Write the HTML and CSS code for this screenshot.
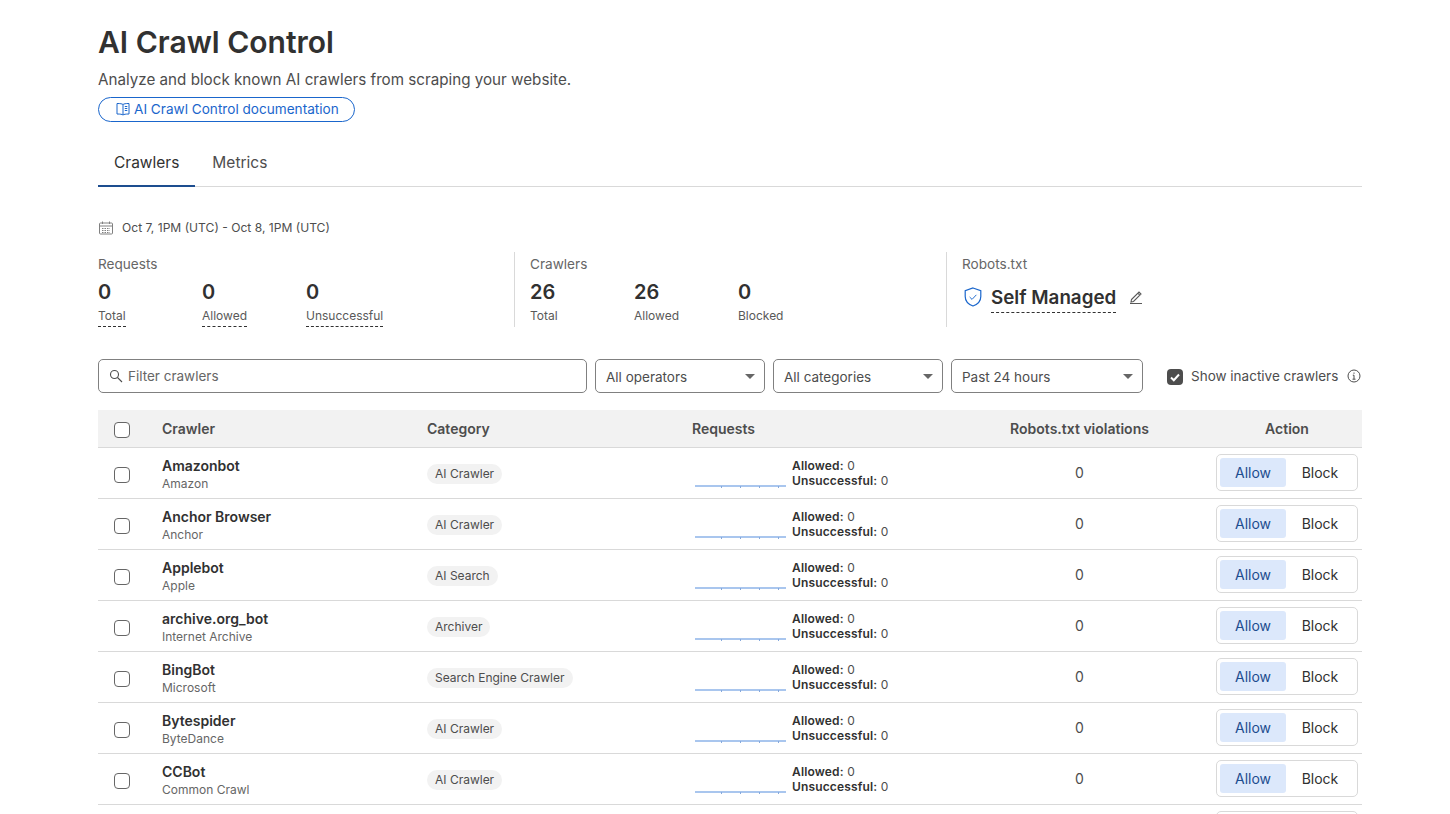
FILE: index.html
```html
<!DOCTYPE html>
<html lang="en">
<head>
    <meta charset="UTF-8">
    <meta name="viewport" content="width=device-width, initial-scale=1.0">
    <title>AI Crawl Control</title>
    <link rel="stylesheet" href="styles.css">
</head>
<body>
    <svg class="sprites" width="0" height="0">
        <symbol id="spark" viewBox="0 0 91 4">
            <rect x="0" y="1" width="91" height="2" fill="#a9c6ee"></rect>
            <rect x="26" y="2" width="1" height="2" fill="#86a9dc"></rect>
            <rect x="45" y="2" width="1" height="2" fill="#86a9dc"></rect>
            <rect x="64" y="2" width="1" height="2" fill="#86a9dc"></rect>
            <rect x="83" y="2" width="1" height="2" fill="#86a9dc"></rect>
        </symbol>
    </svg>

    <main class="page">
        <h1 class="title">AI Crawl Control</h1>
        <p class="subtitle">Analyze and block known AI crawlers from scraping your website.</p>
        <a class="doc-link" href="#">
            <svg width="16" height="16" viewBox="0 0 16 16" fill="none" stroke="#1a66cc" stroke-width="1">
                <path d="M8 3.500C7 2.800 5.500 2.500 2 2.500v10.500c3.500 0 5 .3 6 1 1-.7 2.500-1 6-1V2.500c-3.500 0-5 .3-6 1zM8 3.500V14"></path>
                <path d="M9.800 5.500h2.500M9.800 7.500h2.500M9.800 9.500h2.500"></path>
            </svg>
            AI Crawl Control documentation
        </a>

        <nav class="tabs">
            <a class="tab active" href="#">Crawlers</a>
            <a class="tab" href="#">Metrics</a>
        </nav>

        <div class="date-range">
            <svg width="16" height="16" viewBox="0 0 16 16" fill="none" stroke="#808080" stroke-width="1">
                <rect x="1.500" y="3" width="13" height="11" rx="1"></rect>
                <path d="M1.500 6h13M4.500 1.500V4M11.500 1.500V4"></path>
                <path d="M4 8.500h8M4 10.500h8M4 12.500h8" stroke-dasharray="1.500 1"></path>
            </svg>
            Oct 7, 1PM (UTC) - Oct 8, 1PM (UTC)
        </div>

        <section class="stats">
            <div class="stat-group">
                <div class="stat-label">Requests</div>
                <div class="stat-row">
                    <div class="stat"><div class="stat-value">0</div><div class="stat-name dashed">Total</div></div>
                    <div class="stat"><div class="stat-value">0</div><div class="stat-name dashed">Allowed</div></div>
                    <div class="stat"><div class="stat-value">0</div><div class="stat-name dashed">Unsuccessful</div></div>
                </div>
            </div>
            <div class="stat-group">
                <div class="stat-label">Crawlers</div>
                <div class="stat-row">
                    <div class="stat"><div class="stat-value">26</div><div class="stat-name">Total</div></div>
                    <div class="stat"><div class="stat-value">26</div><div class="stat-name">Allowed</div></div>
                    <div class="stat"><div class="stat-value">0</div><div class="stat-name">Blocked</div></div>
                </div>
            </div>
            <div class="stat-group">
                <div class="stat-label">Robots.txt</div>
                <div class="robots">
                    <svg class="shield" width="24" height="24" viewBox="0 0 20 20" fill="none" stroke="#1a66cc" stroke-width="1">
                        <path d="M10 2.500l6.500 2.300v4.700c0 3.800-2.600 6.500-6.500 8-3.900-1.500-6.500-4.200-6.500-8V4.800z"></path>
                        <path d="M7.200 10l2 2 3.600-3.800" stroke-width="0.800"></path>
                    </svg>
                    <span class="robots-value">Self Managed</span>
                    <svg class="pencil" width="16" height="16" viewBox="0 0 16 16" fill="none" stroke="#595959" stroke-width="1.100">
                        <path d="M3.500 10.500L11 3l2 2-7.500 7.500-2.500.5zM9.800 4.200l2 2M2 14.500h12"></path>
                    </svg>
                </div>
            </div>
        </section>

        <section class="filters">
            <div class="search">
                <svg width="16" height="16" viewBox="0 0 16 16" fill="none" stroke="#4d4d4d" stroke-width="1.100">
                    <circle cx="6.500" cy="6.500" r="4"></circle>
                    <path d="M9.500 9.500l4.500 4.500"></path>
                </svg>
                Filter crawlers
            </div>
            <div class="select">All operators</div>
            <div class="select">All categories</div>
            <div class="select select-wide">Past 24 hours</div>
            <label class="show-inactive">
                <span class="checked-box">
                    <svg width="12" height="12" viewBox="0 0 12 12" fill="none" stroke="#fff" stroke-width="2"><path d="M2 6.500l2.800 2.700L10 3.500"></path></svg>
                </span>
                Show inactive crawlers
                <svg class="info" width="16" height="16" viewBox="0 0 16 16" fill="none" stroke="#4d4d4d" stroke-width="1">
                    <circle cx="8" cy="8" r="6"></circle>
                    <path d="M6.800 7.200H8v4M6.500 11.200h3M8 4.500v1.300"></path>
                </svg>
            </label>
        </section>

        <section class="crawlers">
            <div class="row head">
                <div class="cell-check"><span class="box"></span></div>
                <div>Crawler</div>
                <div>Category</div>
                <div>Requests</div>
                <div class="center">Robots.txt violations</div>
                <div class="center">Action</div>
            </div>

            <div class="row">
                <div class="cell-check"><span class="box"></span></div>
                <div class="crawler"><div class="name">Amazonbot</div><div class="operator">Amazon</div></div>
                <div><span class="tag">AI Crawler</span></div>
                <div class="requests">
                    <svg class="spark"><use href="#spark"></use></svg>
                    <div class="counts"><div><b>Allowed:</b> 0</div><div><b>Unsuccessful:</b> 0</div></div>
                </div>
                <div class="center violations">0</div>
                <div class="action"><div class="toggle"><span class="on">Allow</span><span>Block</span></div></div>
            </div>

            <div class="row">
                <div class="cell-check"><span class="box"></span></div>
                <div class="crawler"><div class="name">Anchor Browser</div><div class="operator">Anchor</div></div>
                <div><span class="tag">AI Crawler</span></div>
                <div class="requests">
                    <svg class="spark"><use href="#spark"></use></svg>
                    <div class="counts"><div><b>Allowed:</b> 0</div><div><b>Unsuccessful:</b> 0</div></div>
                </div>
                <div class="center violations">0</div>
                <div class="action"><div class="toggle"><span class="on">Allow</span><span>Block</span></div></div>
            </div>

            <div class="row">
                <div class="cell-check"><span class="box"></span></div>
                <div class="crawler"><div class="name">Applebot</div><div class="operator">Apple</div></div>
                <div><span class="tag">AI Search</span></div>
                <div class="requests">
                    <svg class="spark"><use href="#spark"></use></svg>
                    <div class="counts"><div><b>Allowed:</b> 0</div><div><b>Unsuccessful:</b> 0</div></div>
                </div>
                <div class="center violations">0</div>
                <div class="action"><div class="toggle"><span class="on">Allow</span><span>Block</span></div></div>
            </div>

            <div class="row">
                <div class="cell-check"><span class="box"></span></div>
                <div class="crawler"><div class="name">archive.org_bot</div><div class="operator">Internet Archive</div></div>
                <div><span class="tag">Archiver</span></div>
                <div class="requests">
                    <svg class="spark"><use href="#spark"></use></svg>
                    <div class="counts"><div><b>Allowed:</b> 0</div><div><b>Unsuccessful:</b> 0</div></div>
                </div>
                <div class="center violations">0</div>
                <div class="action"><div class="toggle"><span class="on">Allow</span><span>Block</span></div></div>
            </div>

            <div class="row">
                <div class="cell-check"><span class="box"></span></div>
                <div class="crawler"><div class="name">BingBot</div><div class="operator">Microsoft</div></div>
                <div><span class="tag">Search Engine Crawler</span></div>
                <div class="requests">
                    <svg class="spark"><use href="#spark"></use></svg>
                    <div class="counts"><div><b>Allowed:</b> 0</div><div><b>Unsuccessful:</b> 0</div></div>
                </div>
                <div class="center violations">0</div>
                <div class="action"><div class="toggle"><span class="on">Allow</span><span>Block</span></div></div>
            </div>

            <div class="row">
                <div class="cell-check"><span class="box"></span></div>
                <div class="crawler"><div class="name">Bytespider</div><div class="operator">ByteDance</div></div>
                <div><span class="tag">AI Crawler</span></div>
                <div class="requests">
                    <svg class="spark"><use href="#spark"></use></svg>
                    <div class="counts"><div><b>Allowed:</b> 0</div><div><b>Unsuccessful:</b> 0</div></div>
                </div>
                <div class="center violations">0</div>
                <div class="action"><div class="toggle"><span class="on">Allow</span><span>Block</span></div></div>
            </div>

            <div class="row">
                <div class="cell-check"><span class="box"></span></div>
                <div class="crawler"><div class="name">CCBot</div><div class="operator">Common Crawl</div></div>
                <div><span class="tag">AI Crawler</span></div>
                <div class="requests">
                    <svg class="spark"><use href="#spark"></use></svg>
                    <div class="counts"><div><b>Allowed:</b> 0</div><div><b>Unsuccessful:</b> 0</div></div>
                </div>
                <div class="center violations">0</div>
                <div class="action"><div class="toggle"><span class="on">Allow</span><span>Block</span></div></div>
            </div>

            <!-- next row only peeks in at the fold -->
            <div class="row">
                <div class="cell-check"></div>
                <div></div>
                <div></div>
                <div></div>
                <div></div>
                <div class="action"><div class="toggle"></div></div>
            </div>
        </section>
    </main>
</body>
</html>
```

FILE: styles.css
```css
html, body {
    height: 100%;
}

body {
    margin: 0;
    overflow: hidden;
    font-family: Inter, "Noto Sans", sans-serif;
    background: #fff;
    color: #313131;
}

.sprites {
    display: block;
}

.page {
    height: 100%;
    box-sizing: border-box;
    overflow: hidden;
    padding: 23px 88px 0 98px;
}

.title {
    margin: 0;
    font-size: 30px;
    line-height: 38px;
    font-weight: 600;
}

.subtitle {
    margin: 7px 0 0;
    font-size: 15.2px;
    line-height: 24px;
    color: #4d4d4d;
}

.doc-link {
    display: inline-flex;
    align-items: center;
    gap: 3px;
    margin-top: 5px;
    padding: 0 15px 2px 16px;
    height: 21px;
    border: 1px solid #1a66cc;
    border-radius: 13px;
    font-size: 13.600px;
    color: #1a66cc;
    text-decoration: none;
}

.tabs {
    display: flex;
    margin-top: 16px;
    border-bottom: 1px solid #d9d9d9;
}

.tab {
    padding: 0 16px;
    height: 49px;
    line-height: 49px;
    font-size: 15.500px;
    color: #4d4d4d;
    text-decoration: none;
    margin-bottom: -1px;
}

.tab.active {
    height: 47px;
    line-height: 49px;
    color: #313131;
    border-bottom: 2px solid #1d4d8f;
    margin-right: 1px;
}

.date-range {
    display: flex;
    align-items: center;
    gap: 8px;
    margin-top: 33px;
    font-size: 12.100px;
    line-height: 16px;
    color: #4d4d4d;
}

.stats {
    display: flex;
    margin-top: 16px;
}

.stat-group {
    box-sizing: border-box;
    width: 432px;
    height: 75px;
    padding-left: 15px;
    border-left: 1px solid #d9d9d9;
}

.stat-group:first-child {
    width: 416px;
    padding-left: 0;
    border-left: none;
}

.stat-group:last-child {
    width: 300px;
}

.stat-label {
    font-size: 13.600px;
    line-height: 24px;
    color: #666;
}

.stat-row {
    display: flex;
}

.stat {
    width: 104px;
}

.stat-value {
    font-size: 20px;
    line-height: 28px;
    font-weight: 600;
    margin-top: 2px;
}

.stat-name {
    width: fit-content;
    margin-top: 2px;
    font-size: 12px;
    line-height: 16px;
    padding-bottom: 2px;
    color: #595959;
}

.stat-name.dashed {
    border-bottom: 1px dashed #313131;
}

.robots {
    display: flex;
    align-items: center;
    margin-top: 8px;
}

.shield {
    margin: -4px 6px 0 -1px;
}

.pencil {
    margin: -4px 0 0 12px;
}

.robots-value {
    font-size: 18.800px;
    line-height: 28px;
    font-weight: 600;
    border-bottom: 1px dashed #313131;
}

.filters {
    display: flex;
    align-items: center;
    gap: 8px;
    margin-top: 32px;
}

.search,
.select {
    box-sizing: border-box;
    flex: none;
    height: 34px;
    border: 1px solid #808080;
    border-radius: 5px;
    font-size: 13.500px;
    display: flex;
    align-items: center;
}

.search {
    width: 489px;
    gap: 4px;
    padding-left: 9px;
    color: #666;
}

.select {
    position: relative;
    width: 170px;
    padding-left: 10px;
    padding-top: 1px;
    color: #4d4d4d;
}

.select-wide {
    width: 192px;
}

.select::after {
    content: "";
    position: absolute;
    right: 9px;
    top: 14px;
    border-left: 5px solid transparent;
    border-right: 5px solid transparent;
    border-top: 5px solid #666;
}

.show-inactive {
    display: flex;
    align-items: center;
    margin-left: 16px;
    font-size: 13.500px;
    color: #4d4d4d;
    white-space: nowrap;
}

.checked-box {
    width: 16px;
    height: 16px;
    margin-right: 8px;
    margin-top: 1px;
    border-radius: 4px;
    background: #4d4d4d;
    display: flex;
    align-items: center;
    justify-content: center;
}

.info {
    margin-left: 8px;
}

.crawlers {
    margin-top: 17px;
}

.row {
    display: grid;
    grid-template-columns: 64px 265px 265px 255px 265px 150px;
    align-items: center;
    height: 50px;
    border-bottom: 1px solid #d9d9d9;
}

.row.head {
    height: 37px;
    background: #f2f2f2;
    font-size: 14px;
    font-weight: 600;
    color: #4d4d4d;
}

.cell-check {
    padding-left: 16px;
    padding-top: 3px;
    display: flex;
}

.box {
    box-sizing: border-box;
    width: 16px;
    height: 16px;
    border: 1px solid #666;
    border-radius: 4px;
    background: #fff;
}

.crawler {
    padding-top: 2px;
}

.name {
    font-size: 14px;
    line-height: 18px;
    font-weight: 600;
}

.operator {
    margin-top: 1px;
    font-size: 12px;
    line-height: 16px;
    color: #666;
}

.tag {
    display: inline-block;
    padding: 0 8px;
    height: 20px;
    line-height: 20px;
    border-radius: 10px;
    background: #f2f2f2;
    font-size: 12px;
    color: #4d4d4d;
}

.center {
    text-align: center;
}

.requests {
    display: flex;
    align-items: flex-end;
    padding-left: 3px;
}

.spark {
    width: 91px;
    height: 4px;
    margin-right: 6px;
}

.counts {
    font-size: 12px;
    line-height: 15px;
    letter-spacing: 0.150px;
    color: #4d4d4d;
}

.counts b {
    font-weight: 600;
    color: #313131;
}

.violations {
    padding-bottom: 2px;
    font-size: 14px;
    color: #4d4d4d;
}

.action {
    display: flex;
    justify-content: flex-end;
    padding-right: 4px;
    padding-bottom: 2px;
}

.toggle {
    box-sizing: border-box;
    display: flex;
    width: 142px;
    height: 37px;
    padding: 3px;
    border: 1px solid #d9d9d9;
    border-radius: 5px;
    font-size: 14px;
    color: #313131;
}

.toggle span {
    flex: 1;
    display: flex;
    align-items: center;
    justify-content: center;
    border-radius: 3px;
}

.toggle .on {
    flex: none;
    width: 66px;
    background: #dce8fb;
    color: #1d4d8f;
}
```
